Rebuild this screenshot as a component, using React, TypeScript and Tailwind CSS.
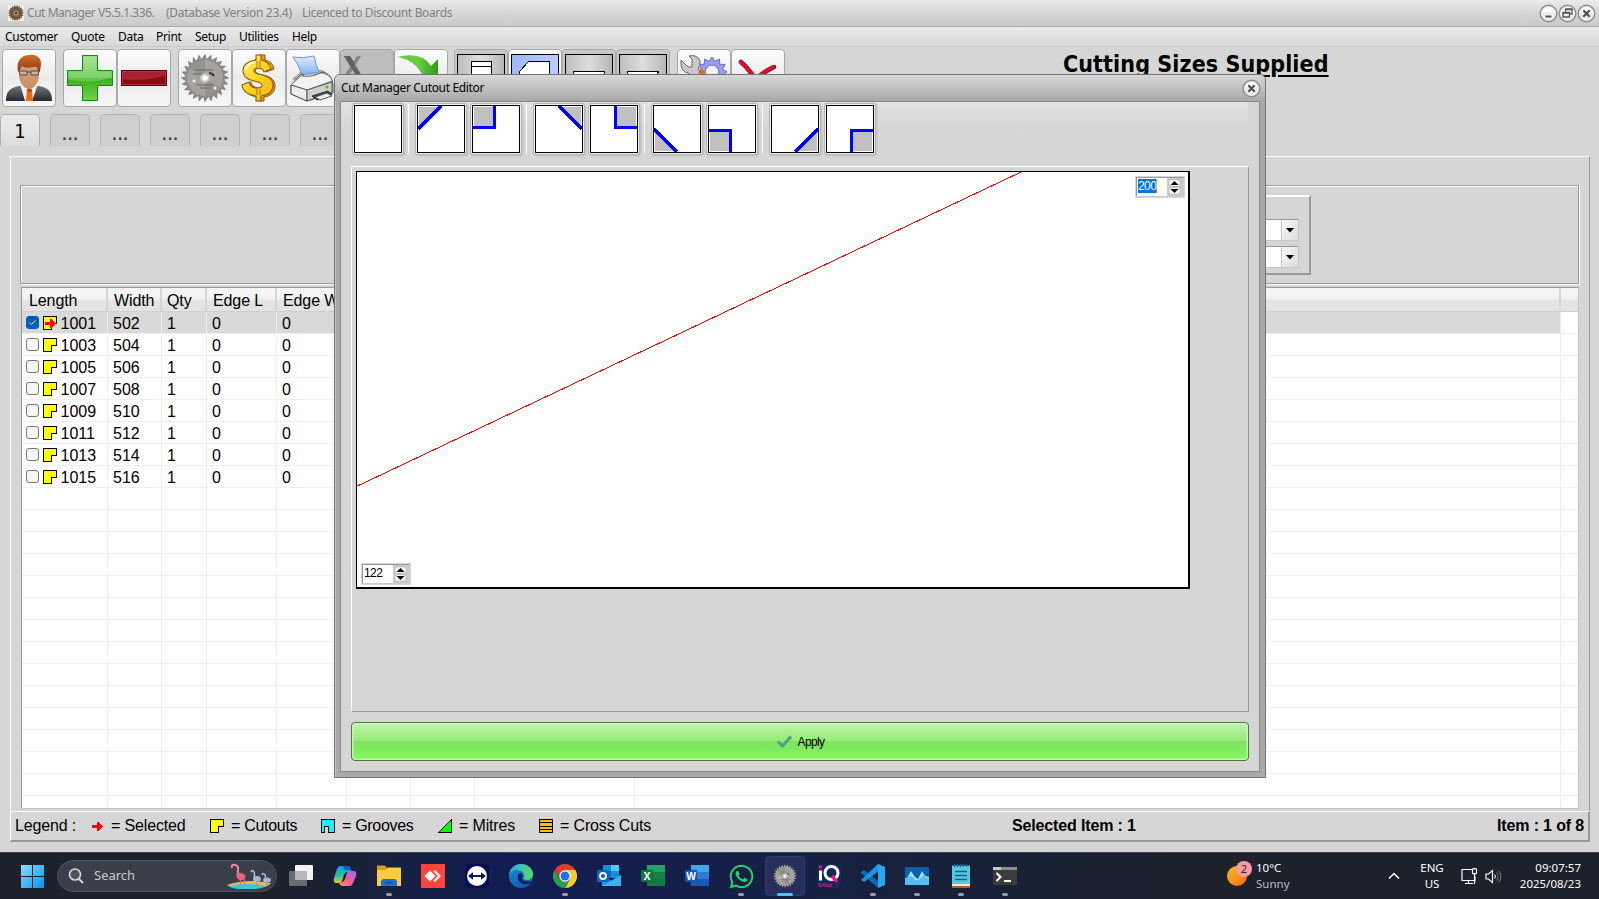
import React from "react";
import { FaWhatsapp } from "react-icons/fa6";

const UI = "font-['Noto_Sans','Open_Sans',sans-serif]";

function gear(cx: number, cy: number, outer: number, inner: number, teeth: number, slant: number) {
  const pts: string[] = [];
  for (let i = 0; i < teeth; i++) {
    const a = (i / teeth) * Math.PI * 2;
    const b = a + ((Math.PI * 2) / teeth) * slant;
    pts.push(`${(cx + Math.cos(a) * outer).toFixed(2)},${(cy + Math.sin(a) * outer).toFixed(2)}`);
    pts.push(`${(cx + Math.cos(b) * inner).toFixed(2)},${(cy + Math.sin(b) * inner).toFixed(2)}`);
  }
  return pts.join(" ");
}

function Saw({ size, tone = "#8f8b89" }: { size: number; tone?: string }) {
  return (
    <svg width={size} height={size} viewBox="0 0 48 48">
      <polygon points={gear(24, 24, 23.5, 18.5, 24, 0.3)} fill={tone} stroke="#6a6766" strokeWidth="0.6" />
      <circle cx="24" cy="24" r="18" fill="#a5a2a0" />
      <path d="M24 24 8 14A18 18 0 0 1 24 6ZM24 24 40 34A18 18 0 0 1 24 42Z" fill="#8b8886" opacity=".6" />
      <path d="M14 16h18M12 20h10M15 31h17M19 34h11" stroke="#65615f" strokeWidth="1.4" opacity=".6" />
      <path d="M28 19a6 6 0 0 1 5 3" stroke="#3b3837" strokeWidth="2" fill="none" />
      <circle cx="24" cy="24" r="5" fill="#c4c2c0" />
      <circle cx="24" cy="24" r="2.8" fill="#fff" />
      <circle cx="13" cy="27" r="1.5" fill="#eee" />
      <circle cx="34" cy="34" r="1.5" fill="#eee" />
    </svg>
  );
}

function UserIcon() {
  return (
    <svg width="48" height="48" viewBox="0 0 48 48">
      <defs>
        <linearGradient id="suit" x1="0" y1="0" x2="0" y2="1"><stop offset="0" stopColor="#70757a" /><stop offset="1" stopColor="#26292c" /></linearGradient>
        <linearGradient id="face" x1="0" y1="0" x2="0" y2="1"><stop offset="0" stopColor="#d9a780" /><stop offset="1" stopColor="#c98e66" /></linearGradient>
        <linearGradient id="hair" x1="0" y1="0" x2="0" y2="1"><stop offset="0" stopColor="#d56c26" /><stop offset="1" stopColor="#8c3a10" /></linearGradient>
      </defs>
      <path d="M1 47c0-9 3-13 13-15h20c10 2 13 6 13 15Z" fill="url(#suit)" />
      <path d="M15 30l3-2 6 8 6-8 3 2-6 17h-7Z" fill="#f2f2f2" />
      <path d="M22 35h5l1 12h-7Z" fill="#e8681c" />
      <path d="M22 35h5l-1 3h-3Z" fill="#b84a0c" />
      <path d="M14 14c0-6 4-9 10-9s10 3 10 9v8c0 6-5 13-10 13s-10-7-10-13Z" fill="url(#face)" />
      <path d="M13 18C11 8 15 1 25 1c6-1 11 3 11 8 0 4-1 6-1 9l-2-1c0-4-2-5-5-4-4 1-9 1-11-1-2 2-2 5-4 6Z" fill="url(#hair)" />
      <path d="M14 17h8v4h-7ZM26 17h8l-1 4h-7ZM22 18h4" fill="#cfd8dc" fillOpacity=".4" stroke="#4a4a4a" strokeWidth="1" />
    </svg>
  );
}

function PlusIcon() {
  return (
    <svg width="48" height="48" viewBox="0 0 48 48">
      <defs><linearGradient id="plus" x1="0" y1="0" x2="0" y2="1"><stop offset="0" stopColor="#8fdd7c" /><stop offset=".5" stopColor="#5cc443" /><stop offset=".51" stopColor="#38b31c" /><stop offset="1" stopColor="#6ed24e" /></linearGradient></defs>
      <path d="M16.5 1.5h15v15h15v15h-15v15h-15v-15h-15v-15h15Z" fill="url(#plus)" stroke="#108a10" />
      <path d="M17.500 2.500h13v15h15v6q-20 7-43 2v-8h15Z" fill="#fff" opacity=".22" />
    </svg>
  );
}

function MinusIcon() {
  return (
    <svg width="48" height="48" viewBox="0 0 48 48">
      <rect x="1.500" y="16.500" width="45" height="15" fill="#8b0a18" stroke="#5e000b" />
      <path d="M2 17h44v4q-20 7-44 4Z" fill="#a82234" />
      <rect x="2.500" y="17.500" width="43" height="13" fill="none" stroke="#b83a4c" strokeWidth=".7" />
    </svg>
  );
}

function DollarIcon() {
  return (
    <svg width="48" height="48" viewBox="0 0 48 48">
      <defs><linearGradient id="gold" x1="0" y1="0" x2="1" y2="1"><stop offset="0" stopColor="#fff27a" /><stop offset=".5" stopColor="#fbd31b" /><stop offset="1" stopColor="#f0b424" /></linearGradient></defs>
      <g strokeLinejoin="round">
        <path d="M24 1h6v5c5 1 8 4 9 9l-8 3c-1-3-3-4-6-4-6 0-6 5-1 6 9 2 16 4 16 12 0 6-4 10-11 11v4h-6v-4C14 42 10 38 8 31l8-3c1 4 4 6 8 6 6 0 7-5 1-6C16 26 10 24 10 16c0-5 4-9 14-11Z" fill="#d9a02a" stroke="#8a520c" />
        <path d="M21 1h5v5c5 1 9 4 10 9l-7 3c-1-3-3-4-6-4-5 0-6 4 0 6 9 2 15 4 15 11 0 6-4 10-12 11v5h-5v-5C13 41 8 38 7 31l7-3c1 4 4 6 8 6 6 0 7-4 1-6C14 26 8 24 8 16c0-5 5-9 13-10Z" fill="url(#gold)" stroke="#8f5a08" strokeWidth="1.100" />
        <path d="M22 7v6M25 7v6M22 35v6M25 35v6" stroke="#a86b0c" />
        <path d="M11 15c1-4 4-6 9-7" stroke="#fffbd0" strokeWidth="1.800" fill="none" />
      </g>
    </svg>
  );
}

function PrinterIcon() {
  return (
    <svg width="48" height="48" viewBox="0 0 48 48">
      <defs><linearGradient id="sheet" x1="0" y1="0" x2="0" y2="1"><stop offset="0" stopColor="#e0efff" /><stop offset="1" stopColor="#7fb0f2" /></linearGradient></defs>
      <path d="M4 25 12 18l15-2 7 1 7 6Z" fill="#c4c4c4" stroke="#777" strokeWidth=".8" />
      <path d="M4 3q10 2 21-1 2 10 5 16l-17 3Q10 11 4 3Z" fill="url(#sheet)" stroke="#7397c8" />
      <path d="M2 31 11 21l3-1 1 3q8 0 16-4l3-1q7 2 9 8l1 4v9L18 47 2 40Z" fill="#d4d4d4" stroke="#555" />
      <path d="m2 31 10-9q9 2 20-3 9 1 11 8L18 36Z" fill="#f3f3f3" stroke="#777" strokeWidth=".8" />
      <path d="M2 31l16 5v11L2 40Z" fill="#ededed" stroke="#555" />
      <path d="M18 36l25-8v10L18 47Z" fill="#d0d0d0" stroke="#555" />
      <path d="m23 42 16-5 4 4-15 5Z" fill="#444" stroke="#333" /><path d="m26 43 12-4 5 3-12 4Z" fill="#eee" stroke="#555" />
      <circle cx="38" cy="33" r="1.500" fill="#49c11c" />
    </svg>
  );
}

function ToolButton({ children, disabled, framed }: { children?: React.ReactNode; disabled?: boolean; framed?: boolean }) {
  const bg = disabled
    ? "bg-[#bdbdbd] border-[#a8a8a8]"
    : framed
    ? "bg-[#c9c9c9] border-[#a8a8a8]"
    : "bg-linear-to-b from-[#fdfdfd] from-0% via-[#ececec] via-50% to-[#f6f6f6] border-[#a8a8a8]";
  return <div className={`flex h-[58px] w-[54px] shrink-0 items-center justify-center rounded-[4px] border ${bg}`}>{children}</div>;
}

function ShapeIcon({ kind }: { kind: number }) {
  return (
    <svg width="48" height="48" viewBox="0 0 48 48" shapeRendering="crispEdges">
      <defs>
        <linearGradient id="greyTile"><stop offset="0" stopColor="#bdbdbd" /><stop offset=".5" stopColor="#dedede" /><stop offset="1" stopColor="#b5b5b5" /></linearGradient>
        <linearGradient id="blueTile"><stop offset="0" stopColor="#9db8fb" /><stop offset="1" stopColor="#b8ceff" /></linearGradient>
      </defs>
      <rect x=".5" y=".5" width="47" height="47" fill={kind === 1 ? "url(#blueTile)" : "url(#greyTile)"} stroke="#000" />
      {kind === 0 && <path d="M14.500 7.500h20v34h-20ZM14 12.500h20" fill="#fff" stroke="#000" />}
      {kind === 1 && <path d="M17.500 7.500h21v34h-30v-24Z" fill="#fff" stroke="#000" />}
      {kind === 2 && <path d="M8.500 17.500h31v16h-31Z" fill="#fff" stroke="#000" />}
      {kind === 3 && <path d="M8.500 17.500h31l-8 16h-23Z" fill="#fff" stroke="#000" />}
    </svg>
  );
}

const shades = ["M2 2H26L2 26Z", "M2 2H24V22H2Z", "M24 2H46V26Z", "M26 2H46V22H26Z", "M2 24V46H24Z", "M2 26H22V46H2Z", "M46 24V46H24Z", "M26 26H46V46H26Z"];
const strokes = ["M1 24 24 1", "M1 22.500H22.500V1", "M24 1 47 24", "M25.500 1V22.500H47", "M1 24 24 47", "M1 25.500H22.500V47", "M47 24 24 47", "M47 25.500H25.500V47"];

function CornerButton({ kind }: { kind: number }) {
  return (
    <div className="size-[50px] shrink-0 rounded-[2px] shadow-[0_0_0_1px_#b4b4b4,1px_1px_2px_1px_#bbbbbb] bg-[#eeeeee] p-px">
      <svg width="48" height="48" viewBox="0 0 48 48" shapeRendering="crispEdges">
        <rect width="48" height="48" fill="#fff" />
        {kind >= 0 && <path d={shades[kind]} fill="#c0c0c0" />}
        {kind >= 0 && <path d={strokes[kind]} fill="none" stroke="#0000ff" strokeWidth="3" />}
        <rect x=".5" y=".5" width="47" height="47" fill="none" stroke="#000" />
      </svg>
    </div>
  );
}

const Sep = () => <div className="mr-[7px] ml-[5px] h-[50px] w-px bg-white" />;

function CutoutMark({ selected }: { selected?: boolean }) {
  return (
    <svg className="shrink-0" width="14" height="14" viewBox="0 0 14 14" shapeRendering="crispEdges">
      <path d="M.5.5h13v7h-5v6h-8Z" fill="#ff0" stroke="#000" />
      {selected && <path d="M2 6h5V3h2v1h1v1h1v1h1v1h1v1h-1v1h-1v1h-1v1H9v1H7V9H2Z" fill="#f00" />}
    </svg>
  );
}

function RoundButton({ kind }: { kind: "min" | "restore" | "close" }) {
  return (
    <svg width="19" height="19" viewBox="0 0 19 19" className="shrink-0">
      <circle cx="9.500" cy="9.500" r="8.300" fill="#ededed" stroke="#8c8c8c" strokeWidth="1.400" />
      <path d="M3 8a7 7 0 0 1 13 0Z" fill="#fff" />
      {kind === "min" && <path d="M6.500 12.500h6" stroke="#555" strokeWidth="2" />}
      {kind === "restore" && <path d="M7.500 7.500V5h6.500v5h-2.500M5 8.500h6.500V13H5ZM5 9h6.500M7.500 5.500H14" fill="none" stroke="#555" strokeWidth="1.300" />}
      {kind === "close" && <path d="m6.300 6.300 6.400 6.400m0-6.400-6.400 6.400" stroke="#505050" strokeWidth="2.200" />}
    </svg>
  );
}

function Spinner({ value, selected }: { value: string; selected?: boolean }) {
  return (
    <div className="h-[22px] w-[50px] border border-[#d6d6d6] bg-[#d6d6d6]">
      <div className="flex h-[20px] w-[48px] border border-t-[#999999] border-r-[#cccccc] border-b-[#cccccc] border-l-[#999999] bg-white">
        <div className="flex w-[30px] items-start pt-px pl-px">
          <span className={`h-[14px] font-['Liberation_Sans',sans-serif] text-[12px] leading-[15px] tracking-[-0.6px] ${selected ? "border-r border-[#ff7b1c] bg-[#0078d7] text-white" : "text-black"}`}>{value}</span>
        </div>
        <svg width="16" height="18" viewBox="0 0 16 18" className="bg-[#cccccc]">
          <rect x="1.500" y="1.500" width="12" height="7" rx="3.500" fill="#f4f4f4" stroke="#aaa" strokeWidth=".7" />
          <rect x="1.500" y="9.500" width="12" height="7" rx="3.500" fill="#f4f4f4" stroke="#aaa" strokeWidth=".7" />
          <path d="M3.500 7h8l-4-4ZM3.500 11h8l-4 4Z" fill="#000" />
        </svg>
      </div>
    </div>
  );
}

const columns: [string, string][] = [
  ["Length", "w-[86px] pl-[7px]"],
  ["Width", "w-[54px] pl-[6px]"],
  ["Qty", "w-[45px] pl-[5px]"],
  ["Edge L", "w-[70px] pl-[6px]"],
  ["Edge W", "w-[70px] pl-[6px]"],
  ["", "w-[64px]"],
  ["", "w-[64px]"],
  ["", "w-[160px]"],
  ["", "w-[926px]"],
];
const cellWidths = ["w-[86px] pl-[4px]", "w-[54px] pl-[5px]", "w-[45px] pl-[5px]", "w-[70px] pl-[5px]", "w-[70px] pl-[5px]", "w-[64px]", "w-[64px]", "w-[160px]", "w-[926px]"];
const items = [0, 1, 2, 3, 4, 5, 6, 7].map((i) => ({ length: 1001 + i * 2, width: 502 + i * 2 }));

function Grid() {
  return (
    <div className="ml-[10px] mt-[3px] h-[522px] w-[1558px] overflow-hidden border border-t-[#999999] border-r-[#c4c4c4] border-b-[#c4c4c4] border-l-[#999999] bg-white font-['Liberation_Sans',Arial,sans-serif] text-[16px] text-black">
      <div className="flex h-[24px] border-b border-[#d0d0d0] bg-linear-to-b from-[#f4f4f4] from-40% to-[#e3e3e3] to-60%">
        {columns.map(([name, w], i) => (
          <div key={i} className={`h-[23px] shrink-0 overflow-hidden border-r-2 border-[#d6d6d6] leading-[25px] tracking-[-0.1px] whitespace-nowrap ${w}`}>{name}</div>
        ))}
      </div>
      {Array.from({ length: 23 }, (_, r) => {
        const item = items[r];
        const values = item ? [String(item.length), String(item.width), "1", "0", "0"] : [];
        return (
          <div key={r} className="flex h-[22px]">
            {cellWidths.map((w, c) => (
              <div key={c} className={`flex h-[22px] shrink-0 items-start border-r border-b border-[#efefef] leading-[23px] ${r === 0 ? "bg-[#d9d9d9]" : "bg-white"} ${w}`}>
                {c === 0 && item && (
                  <>
                    <span className={`mt-[4px] mr-[4px] flex size-[13px] shrink-0 rounded-[3px] border ${r === 0 ? "border-[#005fb8] bg-[#005fb8]" : "border-[#777777] bg-[#f6f6f6]"}`}>
                      {r === 0 && <svg width="11" height="11" viewBox="0 0 11 11"><path d="m2.500 5.500 2 2 4-4" fill="none" stroke="#dbe9f7" /></svg>}
                    </span>
                    <span className="mt-[4px] h-[14px]"><CutoutMark selected={r === 0} /></span>
                    <span className="w-[3.500px] shrink-0" />
                  </>
                )}
                {values[c]}
              </div>
            ))}
            <div className="grow border-b border-[#efefef]" />
          </div>
        );
      })}
    </div>
  );
}

function Combo() {
  return (
    <div className="flex h-[22px] w-[58px] border border-t-[#999999] border-r-[#c8c8c8] border-b-[#c8c8c8] border-l-[#999999] bg-white">
      <div className="grow border-r border-[#c8c8c8]" />
      <svg width="16" height="20" viewBox="0 0 16 20" className="bg-linear-to-br from-[#f8f8f8] to-[#dcdcdc]"><path d="M4 8h8l-4 4.500Z" fill="#000" /></svg>
    </div>
  );
}

function Legend() {
  return (
    <div className="mt-[2px] flex h-[31px] w-[1580px] items-center border-t border-r-2 border-b-2 border-l border-t-white border-r-[#999999] border-b-[#999999] border-l-white pl-[4px] font-['Liberation_Sans',Arial,sans-serif] text-[16px] leading-[26px] tracking-[-0.15px] text-black">
      <span className="w-[77px]">Legend :</span>
      <svg width="11" height="11" viewBox="0 0 11 11" shapeRendering="crispEdges"><path d="M0 4h5V1h2v1h1v1h1v1h1v1h1v1h-1v1H9v1H8v1H7v1H5V7H0Z" fill="#f00" /></svg>
      <span className="w-[107px] pl-[8px]">= Selected</span>
      <CutoutMark />
      <span className="w-[97px] pl-[7px] tracking-[-0.3px]">= Cutouts</span>
      <svg width="14" height="14" viewBox="0 0 14 14" shapeRendering="crispEdges"><path d="M.5.5h13v13h-6v-6h-4v6h-3Z" fill="#0ff" stroke="#000" /></svg>
      <span className="w-[103px] pl-[7px] tracking-[-0.3px]">= Grooves</span>
      <svg width="14" height="14" viewBox="0 0 14 14" shapeRendering="crispEdges"><path d="M.5 13.500 13.500.5v13Z" fill="#0f0" stroke="#000" /></svg>
      <span className="w-[87px] pl-[7px]">= Mitres</span>
      <svg width="14" height="14" viewBox="0 0 14 14" shapeRendering="crispEdges"><path d="M.5.5h13v13H.5ZM1 3.500h12M1 7.500h12M1 10.500h12" fill="#ffc000" stroke="#000" /></svg>
      <span className="w-[459px] pl-[7px]">= Cross Cuts</span>
      <span className="font-bold">Selected Item : 1</span>
      <span className="mr-[4px] ml-auto font-bold">Item : 1 of 8</span>
    </div>
  );
}

function Dialog() {
  return (
    <div className="absolute top-[74px] left-[334px] flex h-[704px] w-[932px] flex-col rounded-t-[6px] border border-[#737373] bg-[#a9a9a9] shadow-[inset_1px_0_0_#c4c4c4]">
      <div className="flex h-[26px] items-center justify-between rounded-t-[5px] bg-linear-to-b from-[#d8d8d8] via-[#c0c0c0] to-[#a8a8a8] pr-[4px] pl-[6px]">
        <span className={`${UI} text-[12px] tracking-[-0.34px] text-black`}>Cut Manager Cutout Editor</span>
        <RoundButton kind="close" />
      </div>
      <div className="mx-[5px] flex h-[671px] flex-col border border-[#888888] bg-[#d6d6d6]">
        <div className="mr-[11px] flex h-[64px] bg-linear-to-b from-[#e2e2e2] to-[#d6d6d6] to-45% pt-[2px] pl-[12px]">
          <CornerButton kind={-1} />
          {[0, 2, 4, 6].map((k) => (
            <React.Fragment key={k}>
              <Sep />
              <CornerButton kind={k} />
              <div className="w-[5px]" />
              <CornerButton kind={k + 1} />
            </React.Fragment>
          ))}
        </div>
        <div className="ml-[10px] h-[546px] w-[898px] border border-t-white border-r-[#999999] border-b-[#999999] border-l-white pt-[4px] pl-[4px]">
          <div className="relative h-[418px] w-[834px] border-t border-r-2 border-b-2 border-l border-black bg-white">
            <svg width="831" height="415" viewBox="0 0 831 415" shapeRendering="crispEdges">
              <path d="M0 314.200 664 0" stroke="#ff0000" strokeWidth="1" />
            </svg>
            <div className="absolute top-[4px] right-[3px]"><Spinner value="200" selected /></div>
            <div className="absolute bottom-[2px] left-[4px]"><Spinner value="122" /></div>
          </div>
        </div>
        <div className="mt-[10px] ml-[10px] flex h-[39px] w-[898px] items-center justify-center rounded-[4px] border border-[#4a7a3c] bg-[linear-gradient(to_bottom,#c0f5ab_0%,#a0ef85_35%,#96ea79_49%,#7fe25f_50%,#80ec5e_75%,#8df76c_100%)] pl-px shadow-[inset_0_0_2px_1px_#d6fbc8]">
          <svg width="17" height="14" viewBox="0 0 17 14"><path d="m2 6.500 4.500 4.500 8.500-9.500" fill="none" stroke="#4da38a" strokeWidth="3" /></svg>
          <span className="pt-px pl-[4px] font-['Liberation_Sans',sans-serif] text-[12px] tracking-[-0.6px] text-black">Apply</span>
        </div>
      </div>
    </div>
  );
}

function OfficeIcon({ letter, a, b, c }: { letter: string; a: string; b: string; c: string }) {
  return (
    <svg width="24" height="24" viewBox="0 0 24 24">
      <rect x="6" y="1" width="18" height="21" fill={a} />
      <rect x="6" y="8" width="18" height="7" fill={b} />
      <rect x="6" y="15" width="18" height="7" fill={c} />
      <rect x="0" y="6" width="12" height="12" rx="1" fill={c} stroke="#00000022" />
      <text x="6" y="16" textAnchor="middle" fontFamily="Open Sans" fontWeight="700" fontSize="10" fill="#fff">{letter}</text>
    </svg>
  );
}

const taskbar: { icon: React.ReactNode; dot?: boolean; active?: boolean }[] = [
  { icon: <svg width="24" height="24" viewBox="0 0 24 24"><rect x="6" y="1" width="18" height="15" rx="1" fill="#f2f2f2" /><rect x="0" y="7" width="18" height="15" rx="1" fill="#666b73" /><path d="M6 7h12v9H6Z" fill="#b5b7bb" /></svg> },
  {
    icon: (
      <svg width="24" height="24" viewBox="0 0 24 24">
        <defs>
          <linearGradient id="cpA" x1="0" y1="0" x2="0" y2="1"><stop offset="0" stopColor="#1d9bf0" /><stop offset=".55" stopColor="#2cb9a2" /><stop offset="1" stopColor="#f0c92a" /></linearGradient>
          <linearGradient id="cpB" x1="1" y1="0" x2="0" y2="1"><stop offset="0" stopColor="#a266f5" /><stop offset=".5" stopColor="#ed5c9b" /><stop offset="1" stopColor="#ff9253" /></linearGradient>
        </defs>
        <path d="M7 2h8q2 0 3 4l1 2h-4q-3 0-4 3l-2 6q-1 2-3 2H3q-3 0-2-5l3-9Q5 2 7 2Z" fill="url(#cpA)" />
        <path d="M17 22H9q-2 0-3-3l3-1q2 0 3-3l2-6q1-2 3-2h4q3 0 2 5l-3 7q-1 3-3 3Z" fill="url(#cpB)" />
        <path d="M7 2h8q2 0 3 4h-5Q11 6 10 2Z" fill="#1b57c4" />
      </svg>
    ),
  },
  {
    icon: <svg width="24" height="24" viewBox="0 0 24 24"><path d="M0 1.500h8l2.500 3H24V7H0Z" fill="#d99a14" /><path d="M0 6h8l3-2.500h13V22H0Z" fill="#fccb3e" /><path d="M4 22v-4q0-3 3-3h10q3 0 3 3v4Z" fill="#1274cf" /><path d="M8 18.500h8" stroke="#0b4d96" strokeWidth="1.500" /></svg>,
    dot: true,
  },
  { icon: <svg width="24" height="24" viewBox="0 0 24 24"><rect width="24" height="24" fill="#ff4539" /><path d="m9 6.500 5.500 5.500L9 17.500 3.500 12ZM12.500 7.500 14 6l6 6-6 6-1.500-1.500L17 12Z" fill="#fff" /></svg> },
  { icon: <svg width="24" height="24" viewBox="0 0 24 24"><rect width="24" height="24" rx="3" fill="#050f4f" /><circle cx="12" cy="12" r="10" fill="#fff" /><path d="m3 12 5-3.800V11h8V8.200L21 12l-5 3.800V13H8v2.800Z" fill="#0a1a55" /></svg> },
  {
    icon: (
      <svg width="24" height="24" viewBox="0 0 24 24">
        <defs>
          <linearGradient id="edA"><stop offset="0" stopColor="#2aa7e8" /><stop offset="1" stopColor="#55dd6a" /></linearGradient>
          <linearGradient id="edB" x1="0" y1="0" x2="1" y2="1"><stop offset="0" stopColor="#1b8ee0" /><stop offset="1" stopColor="#0c4fa0" /></linearGradient>
        </defs>
        <circle cx="12" cy="12" r="12" fill="url(#edB)" />
        <path d="M0 11C1 4 6 0 12 0c7 0 12 5 12 10 0 4-3 6-6 6-3 0-4-1-3-3C16 9 12 6 8 6 4 6 1 8 0 11Z" fill="url(#edA)" />
        <path d="M9 12c-1 5 3 9 8 8 3 0 5-1 6-3-2 1-4 1-7 0-3 0-4-4-2-5l-2-3q-3 0-3 3Z" fill="#12205a" />
      </svg>
    ),
  },
  {
    icon: (
      <svg width="24" height="24" viewBox="0 0 24 24">
        <path d="M12 12V6h10.400A12 12 0 0 1 12 24l5-9Z" fill="#fcc934" />
        <path d="M12 12l5 3-5 9A12 12 0 0 1 1.600 6L7 15Z" fill="#2a9e4a" /><path d="M1.600 6A12 12 0 0 1 22.400 6H12L7 14Z" fill="#e33b2e" />
        <circle cx="12" cy="12" r="5.700" fill="#fff" /><circle cx="12" cy="12" r="4.500" fill="#1f70e6" />
      </svg>
    ),
    dot: true,
  },
  {
    icon: (
      <svg width="24" height="24" viewBox="0 0 24 24">
        <rect x="6" y="1" width="16" height="13" fill="#1490df" /><path d="M14 1h8v6h-8Z" fill="#50c9f5" /><path d="M6 7h8v7H6Z" fill="#0a62b8" />
        <path d="M5 11 14.500 17 24 11v11H5Z" fill="#1b9de5" /><path d="m5 22 19-11v11Z" fill="#35b4f0" />
        <rect y="6" width="12" height="12" rx="1" fill="#0b66bd" /><circle cx="6" cy="12" r="3" fill="none" stroke="#fff" strokeWidth="1.800" />
      </svg>
    ),
  },
  { icon: <OfficeIcon letter="X" a="#21a366" b="#18804a" c="#107c41" /> },
  { icon: <OfficeIcon letter="W" a="#41a5ee" b="#2b7cd3" c="#185abd" /> },
  { icon: <FaWhatsapp size={27} color="#25d366" />, dot: true },
  { icon: <Saw size={24} tone="#b5aca4" />, active: true },
  {
    icon: (
      <svg width="24" height="24" viewBox="0 0 24 24"><rect width="24" height="24" rx="3" fill="#152658" />
        <circle cx="14.500" cy="9" r="6.500" fill="none" stroke="#fff" strokeWidth="3" /><path d="M3.500 6.500v10" stroke="#fff" strokeWidth="3" /><circle cx="3.500" cy="3" r="1.800" fill="#f0147a" />
        <path d="m15 12 5 6" stroke="#f0147a" strokeWidth="3.500" /><text x="1" y="22.500" fontFamily="Liberation Sans" fontWeight="700" fontSize="6" fill="#c81a70">64bit</text>
      </svg>
    ),
  },
  { icon: <svg width="24" height="24" viewBox="0 0 24 24"><path d="m0 8 3-2 15 12-1 6L0 9Z" fill="#0a6cb5" /><path d="M0 16 17 0l1 7L3 18l-3-2Z" fill="#1f93dc" /><path d="m17 0 7 3v18l-7 3Z" fill="#29a8f2" /></svg>, dot: true },
  { icon: <svg width="24" height="18" viewBox="0 0 24 18"><rect width="24" height="18" rx="1" fill="#0a5fb0" /><path d="M0 11h2l4-7 4 6 3 2 4-8 3 5 4 1v8H0Z" fill="#9fe0fb" /><path d="M0 12l6-3 6 5 6-5 6 3v6H0Z" fill="#56bdf0" /></svg>, dot: true },
  { icon: <svg width="20" height="24" viewBox="0 0 20 24"><rect x="1" y="1.500" width="18" height="20" fill="#55c8e4" /><path d="M3.500 0v3M6.500 0v3M9.500 0v3M12.500 0v3M15.500 0v3" stroke="#12627e" strokeWidth="1.300" /><path d="M4 7.500h12M4 11.500h12M4 15.500h12" stroke="#11607c" strokeWidth="1.500" /><path d="M1 20h18v2H1Z" fill="#e8e8e8" /><path d="M1 22h18v2H1Z" fill="#b05a1c" /></svg>, dot: true },
  { icon: <svg width="24" height="18" viewBox="0 0 24 18"><rect width="24" height="18" rx="1" fill="#3b3b3b" /><path d="M0 0h24v3H0Z" fill="#8e8e8e" /><path d="M0 0h8v3H0Z" fill="#c9c9c9" /><path d="m3.500 6 4 4-4 4M11 14h7" fill="none" stroke="#fff" strokeWidth="2" /></svg>, dot: true },
];

function Taskbar() {
  return (
    <div className={`flex h-[47px] w-full items-center border-t border-[#3d4150] bg-linear-to-r from-[#1c212c] from-[17%] via-[#131d54] via-[32%] to-[#1c212b] to-[75%] ${UI} text-white`}>
      <svg className="ml-[21px] shrink-0" width="23" height="23" viewBox="0 0 23 23">
        <defs><linearGradient id="win" x1="0" y1="0" x2="1" y2="1"><stop offset="0" stopColor="#7fe3fb" /><stop offset="1" stopColor="#0b8ff0" /></linearGradient></defs>
        <path d="M0 0h11v11H0ZM12 0h11v11H12ZM0 12h11v11H0ZM12 12h11v11H12Z" fill="url(#win)" />
      </svg>
      <div className="ml-[13px] flex h-[32px] w-[220px] shrink-0 items-center rounded-full border border-[#4c515b] bg-[#3a3f49] pr-[4px] pl-[10px]">
        <svg width="16" height="16" viewBox="0 0 16 16"><circle cx="7" cy="6.500" r="5.500" fill="#4c5059" stroke="#d6d8db" strokeWidth="1.600" /><path d="m11 11 4 4" stroke="#d6d8db" strokeWidth="2" /></svg>
        <span className="ml-[10px] text-[13px] text-[#c9cbce]">Search</span>
        <svg className="ml-auto" width="46" height="26" viewBox="0 0 46 26">
          <path d="M1 22q20-7 44-2-3 5-16 5H12Q4 25 1 22Z" fill="#e5b762" /><path d="M3 23q18-4 36 0-4 3-12 3H12Q5 25 3 23Z" fill="#36c8d8" />
          <path d="M6 5Q5 1 9 2q4 1 3 5-1 3 1 5" fill="none" stroke="#f58aa0" strokeWidth="2" /><path d="M10 12q4-5 10 1l-3 4q-6 1-7-5Z" fill="#ef5f80" /><path d="m14 16 1 7m3-8 1 4-2 4" stroke="#f06a86" fill="none" strokeWidth="1.100" />
          <path d="M25 9q1-3 3 0 1 3 0 5M36 12q1-3 3 0 1 2 0 4" fill="none" stroke="#b9c0d8" strokeWidth="1.500" /><ellipse cx="31" cy="16" rx="4" ry="3" fill="#aab3d2" /><ellipse cx="41" cy="17" rx="4" ry="2.500" fill="#aab3d2" /><path d="M31 18v5M41 19v4" stroke="#8b93b0" />
        </svg>
      </div>
      <div className="ml-[2px] flex h-[46px] shrink-0">
        {taskbar.map((t, i) => (
          <div key={i} className="flex w-[44px] flex-col items-center">
            <div className={`mt-[3px] flex h-[40px] w-[40px] items-center justify-center rounded-[4px] ${t.active ? "border border-[#323a66] bg-[#262e5c]" : ""}`}>{t.icon}</div>
            {t.dot && <div className="mt-[-3px] h-[3px] w-[6px] shrink-0 rounded-full bg-[#9a9eac]" />}
            {t.active && <div className="mt-[-3px] h-[3px] w-[16px] shrink-0 rounded-full bg-[#4cc2ff]" />}
          </div>
        ))}
      </div>
      <svg className="ml-[200px] shrink-0" width="28" height="30" viewBox="0 0 28 30">
        <defs><linearGradient id="sun" x1="0" y1="0" x2="1" y2="1"><stop offset="0" stopColor="#f9c022" /><stop offset="1" stopColor="#f06a12" /></linearGradient></defs>
        <circle cx="10" cy="15" r="10" fill="url(#sun)" /><circle cx="17" cy="8" r="8" fill="#ff99a4" />
        <text x="17" y="12" textAnchor="middle" fontFamily="Noto Sans" fontSize="11" fill="#222">2</text>
      </svg>
      <div className="ml-px w-[132px] text-[11.500px] leading-[16px]"><div>10°C</div><div className="text-[#b9bcc1]">Sunny</div></div>
      <svg width="12" height="8" viewBox="0 0 12 8" className="shrink-0"><path d="m1 6.500 5-5 5 5" fill="none" stroke="#fff" strokeWidth="1.500" /></svg>
      <div className="ml-[20px] w-[24px] text-center text-[11.500px] leading-[16px]"><div>ENG</div><div>US</div></div>
      <svg className="ml-[17px] shrink-0" width="17" height="17" viewBox="0 0 17 17"><path d="M11 1.500H1v11h13V8.500M7.500 12.500v3M4 15.500h8" fill="none" stroke="#fff" strokeWidth="1.200" /><rect x="11.500" y=".7" width="4" height="5" rx="1" fill="none" stroke="#fff" strokeWidth="1.200" /><path d="M13.500 6v10" stroke="#fff" strokeWidth="1.200" /></svg>
      <svg className="ml-[7px] shrink-0" width="17" height="15" viewBox="0 0 17 15"><path d="M1 5h2.500L7.500 1.500v12L3.500 10H1Z" fill="none" stroke="#fff" strokeWidth="1.200" /><path d="M9.500 5.500a3 3 0 0 1 0 4" fill="none" stroke="#ddd" strokeWidth="1.100" /><path d="M11.500 3.500a6 6 0 0 1 0 8M13.500 1.500a9 9 0 0 1 0 12" fill="none" stroke="#70747b" strokeWidth="1.100" /></svg>
      <div className="mr-[18px] ml-auto text-right text-[11.500px] leading-[16px]"><div>09:07:57</div><div>2025/08/23</div></div>
    </div>
  );
}

const menus: [string, string][] = [
  ["Customer", "w-[66px]"], ["Quote", "w-[47px]"], ["Data", "w-[38px]"], ["Print", "w-[39px]"], ["Setup", "w-[44px]"], ["Utilities", "w-[53px]"], ["Help", "w-[40px]"],
];

export default function App() {
  return (
    <div className="relative flex h-[899px] w-[1599px] flex-col overflow-hidden bg-[#d6d6d6]">
      <div className={`flex h-[27px] shrink-0 items-center border-b border-[#aaaaaa] bg-linear-to-b from-[#ebebeb] via-[#d6d6d6] via-50% to-[#cacaca] pl-[8px] text-[12px] text-[#808080] ${UI}`}>
        <div className="flex size-[16px] items-center justify-center bg-[#eeeeee]">
          <svg width="16" height="16" viewBox="0 0 16 16"><polygon points={gear(8, 8, 8, 6.5, 18, 0.4)} fill="#7a6850" /><circle cx="8" cy="8" r="6" fill="#6d5a41" /><circle cx="8" cy="8" r="2.600" fill="#a8977c" /><circle cx="8" cy="8" r="1.200" fill="#3b3020" /></svg>
        </div>
        <span className="w-[139px] shrink-0 pl-[3px] tracking-[-0.45px] whitespace-nowrap">Cut Manager V5.5.1.336.</span>
        <span className="w-[136px] shrink-0 pl-[3px] tracking-[-0.3px] whitespace-nowrap">(Database Version 23.4)</span>
        <span className="shrink-0 pl-[3px] tracking-[-0.35px] whitespace-nowrap">Licenced to Discount Boards</span>
        <div className="mr-[3px] ml-auto flex"><RoundButton kind="min" /><RoundButton kind="restore" /><RoundButton kind="close" /></div>
      </div>
      <div className={`flex h-[20px] shrink-0 items-center border-b border-[#cbcbcb] bg-linear-to-b from-[#ebebeb] to-[#d8d8d8] pl-[5px] text-[12px] tracking-[-0.3px] text-black ${UI}`}>
        {menus.map(([m, w]) => <span key={m} className={`shrink-0 ${w}`}>{m}</span>)}
      </div>
      <div className="mt-[2px] flex h-[58px] shrink-0 pl-[2px]">
        <ToolButton><UserIcon /></ToolButton>
        <div className="w-[7px]" />
        <ToolButton><PlusIcon /></ToolButton>
        <ToolButton><MinusIcon /></ToolButton>
        <div className="w-[7px]" />
        <ToolButton><Saw size={48} /></ToolButton>
        <ToolButton><DollarIcon /></ToolButton>
        <ToolButton><PrinterIcon /></ToolButton>
        <ToolButton disabled><svg width="48" height="48" viewBox="0 0 48 48"><path d="M1 2h6l12 20h-6Z" fill="#666" /><path d="M18 2h-4L1 22h5Z" fill="#858585" /><path d="M1 2h6l5 8-2 6Z" fill="#606060" /></svg></ToolButton>
        <ToolButton><svg width="48" height="48" viewBox="0 0 48 48"><defs><linearGradient id="arrow"><stop offset="0" stopColor="#5fc83a" /><stop offset=".5" stopColor="#6bd044" /><stop offset="1" stopColor="#2c9c12" /></linearGradient></defs><path d="M0 3Q25-3 34 12l7-7v28H17l10-9Q19 6 0 3Z" fill="url(#arrow)" /></svg></ToolButton>
        <div className="w-[6px]" />
        {[0, 1, 2, 3].map((k) => <ToolButton key={k} framed={k !== 1}><ShapeIcon kind={k} /></ToolButton>)}
        <div className="w-[7px]" />
        <ToolButton>
          <svg width="48" height="48" viewBox="0 0 48 48"><polygon points={gear(32, 18, 15, 11, 12, 0.5)} fill="#9a9cf0" stroke="#6668c0" /><circle cx="32" cy="18" r="7" fill="#f4f4f4" stroke="#6668c0" /><path d="M1 6 8 13h4V5L9 2q8-2 11 5 1 4-2 8l8 10-6 5L8 19Q0 18 1 6Z" fill="#c9c9c9" stroke="#666" /><path d="m18 18 4-3 5 6-4 4Z" fill="#e0682a" /></svg>
        </ToolButton>
        <ToolButton><svg width="48" height="48" viewBox="0 0 48 48"><path d="M7 8q10 8 22 30M40 13Q21 22 11 40" fill="none" stroke="#55101c" strokeWidth="4.500" strokeLinecap="round" /><path d="M7 8q10 8 21 29M39 13Q20 22 10 40" fill="none" stroke="#d8102c" strokeWidth="4" strokeLinecap="round" /></svg></ToolButton>
        <div className="ml-[278px] pt-px font-['DejaVu_Sans_Condensed','DejaVu_Sans',sans-serif] text-[23px] leading-[28px] font-bold tracking-[0.1px] whitespace-nowrap text-black underline decoration-2 underline-offset-[3px]">Cutting Sizes Supplied</div>
      </div>
      <div className="mt-[7px] flex h-[32px] shrink-0 gap-[10px] font-['DejaVu_Sans_Condensed','Noto_Sans',sans-serif] text-[20px]">
        {["1", "...", "...", "...", "...", "...", "..."].map((t, i) => (
          <div key={i} className={`flex h-[32px] w-[40px] items-center justify-center rounded-t-[5px] border border-b-0 ${i === 0 ? "border-[#b0b0b0] bg-linear-to-b from-[#ececec] to-[#dcdcdc] leading-[30px] text-black" : "border-[#b4b4b4] bg-[#cfcfcf] pt-[4px] leading-[26px] text-[#333333] [-webkit-text-stroke:0.2px_#333333]"}`}>{t}</div>
        ))}
      </div>
      <div className="mt-[10px] ml-[10px] h-[655px] w-[1580px] shrink-0 border border-t-white border-r-[#999999] border-b-transparent border-l-white">
        <div className="mt-[28px] ml-[9px] h-[99px] w-[1559px] border border-[#999999] shadow-[1px_1px_0_#ffffff,inset_1px_1px_0_#ffffff]">
          <div className="mt-[9px] ml-[1179px] flex h-[80px] w-[111px] flex-col items-end gap-[5px] border-2 border-t-white border-r-[#999999] border-b-[#999999] border-l-white pt-[22px] pr-[10px]">
            <Combo />
            <Combo />
          </div>
        </div>
        <Grid />
      </div>
      <div className="mt-[-2px] ml-[10px] flex h-[34px] shrink-0 items-start"><Legend /></div>
      <div className="mt-auto shrink-0"><Taskbar /></div>
      <Dialog />
    </div>
  );
}
